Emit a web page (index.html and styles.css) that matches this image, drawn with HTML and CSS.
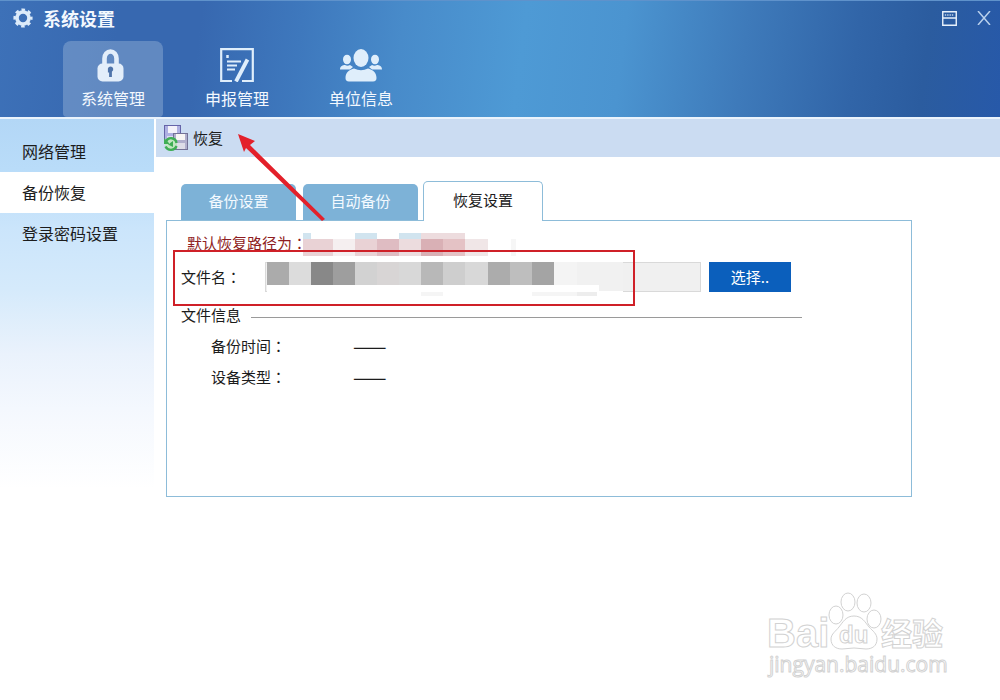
FILE: index.html
```html
<!DOCTYPE html>
<html lang="zh-CN">
<head>
    <meta charset="UTF-8">
    <meta name="viewport" content="width=device-width, initial-scale=1">
    <title>系统设置</title>
    <link rel="stylesheet" href="styles.css">
</head>
<body>
    <header>
        <div class="titlebar">
            <svg class="gear" viewBox="0 0 20 20" width="20" height="20">
                <circle cx="10" cy="10" r="8" fill="none" stroke="#dcebfa" stroke-width="3.2" stroke-dasharray="3.4 2.883" stroke-dashoffset="1.7"/>
                <circle cx="10" cy="10" r="6" fill="none" stroke="#dcebfa" stroke-width="3.6"/>
            </svg>
            <h1>系统设置</h1>
            <div class="window-buttons">
                <button type="button" aria-label="菜单">
                    <svg viewBox="0 0 16 16" width="15" height="15" fill="none" stroke="#e8f1fb">
                        <path d="M.8.8h14.4v14.4H.8zM1 7.4h14" stroke-width="1.5"/>
                        <path d="M3 4.2h10" stroke-width="2" stroke-dasharray="1.5 1" opacity=".6"/>
                    </svg>
                </button>
                <button type="button" aria-label="关闭">
                    <svg viewBox="0 0 14 14" width="14" height="14" fill="none" stroke="#b9d0ec" stroke-width="1.5">
                        <path d="M1 0l12 14M13 0L1 14"/>
                    </svg>
                </button>
            </div>
        </div>
        <nav class="toolbar">
            <a href="#" class="tool active">
                <svg viewBox="0 0 40 34" width="40" height="34">
                    <path d="M11.500 18V10.500a6 7 0 0 1 12 0v7.500" fill="none" stroke="#e3eefa" stroke-width="4.600"/>
                    <rect x="4.500" y="15.500" width="26" height="18" rx="5" fill="#e3eefa"/>
                    <path d="M17.500 18.500a2.800 2.800 0 0 1 1.400 5.200V29h-2.800V24.500h-1.200V20.500a2.800 2.800 0 0 1 2.600-2z" fill="#4f74aa"/>
                </svg>
                系统管理
            </a>
            <a href="#" class="tool">
                <svg viewBox="0 0 34 34" width="34" height="34" fill="none" stroke="#dfeefb">
                    <path d="M12 33H1.200V1.200H32.800V33H22" stroke-width="2.200"/>
                    <path d="M7.500 7v3" stroke-width="2.500"/>
                    <path d="M7 13.500h14M7 17.500h10M7 21.500h8" stroke-width="1.800"/>
                    <path d="M27.500 11.500L16 33.500" stroke-width="3.800"/>
                </svg>
                申报管理
            </a>
            <a href="#" class="tool">
                <svg viewBox="0 0 42 34" width="42" height="34" fill="#dfeefb">
                    <ellipse cx="21" cy="10" rx="7.500" ry="9"/>
                    <path d="M5.500 30c0-6 4-8 8.500-9.500q7 3.500 14 0c4.500 1.500 8.500 3.500 8.500 9.500 0 2-1 3.500-3.500 3.500h-24C6.500 33.500 5.500 32 5.500 30z"/>
                    <ellipse cx="7" cy="11.500" rx="4" ry="4.800"/>
                    <ellipse cx="35" cy="11.500" rx="4" ry="4.800"/>
                    <path d="M0 21.500c0-3.500 3-4.500 5-4.500q2.500 1.500 5 0l3 2-3 2.500zM42 21.500c0-3.500-3-4.500-5-4.500q-2.500 1.500-5 0l-3 2 3 2.500z"/>
                </svg>
                单位信息
            </a>
        </nav>
    </header>

    <div class="layout">
        <aside>
            <a href="#">网络管理</a>
            <a href="#" class="current">备份恢复</a>
            <a href="#">登录密码设置</a>
        </aside>

        <main>
            <div class="page-title">
                <svg viewBox="0 0 26 28" width="26" height="28">
                    <rect x="1.500" y="1.500" width="16" height="17" fill="#aeb0e2" stroke="#6564a8"/>
                    <rect x="5" y="2" width="9" height="7" fill="#f3f2fa"/>
                    <rect x="4" y="12" width="11" height="7" fill="#dcdcf0"/>
                    <rect x="10.500" y="9.500" width="14" height="16" fill="#b0afcd" stroke="#737296"/>
                    <rect x="13" y="10" width="9" height="6" fill="#f8f6f4"/>
                    <rect x="14" y="19" width="8" height="6" fill="#dddde8"/>
                    <circle cx="8" cy="20" r="6" fill="#c2e6c2"/>
                    <path d="M3 17.500a5.500 5.500 0 0 1 10.500 1.500M13.500 22a6 6 0 0 1-11 .5" fill="none" stroke="#3fae55" stroke-width="2.400"/>
                    <path d="M1 14v6h6zM5 20.500l5-3.500v6z" fill="#3fae55"/>
                </svg>
                <h2>恢复</h2>
                <svg class="arrow" viewBox="0 0 88 88" width="88" height="88">
                    <path d="M1 1L18 8 13 12 88 86 85 88 9 15 7 19z" fill="#e3202a"/>
                </svg>
            </div>

            <div class="tabs" role="tablist">
                <button type="button" role="tab">备份设置</button>
                <button type="button" role="tab">自动备份</button>
                <button type="button" role="tab" class="selected" aria-selected="true">恢复设置</button>
            </div>

            <section class="panel">
                <div class="row path">
                    <span>默认恢复路径为<span class="colon" lang="zh-TW">：</span></span>
                    <svg viewBox="0 0 213 24" width="213" height="24" shape-rendering="crispEdges">
                        <path d="M0 0h8v6H0zM52 0h22v6H52zM96 0h22v6H96z" fill="#d1e4ef"/>
                        <path d="M118 0h44v6h-44z" fill="#eddcde"/>
                        <path d="M0 6h30v17H0zM52 6h22v17H52z" fill="#e9d2d5"/>
                        <path d="M30 6h22v17H30z" fill="#f5eff0"/>
                        <path d="M74 6h22v17H74z" fill="#dfbcc2"/>
                        <path d="M96 6h22v17H96z" fill="#ecdcde"/>
                        <path d="M118 6h22v17h-22z" fill="#d9b0b5"/>
                        <path d="M140 6h22v17h-22z" fill="#e4c2c5"/>
                        <path d="M162 6h23v17h-23z" fill="#f0e6e7"/>
                        <path d="M208 6h5v17h-5z" fill="#f6f6f6"/>
                    </svg>
                </div>

                <div class="row file">
                    <label for="filename">文件名<span class="colon" lang="zh-TW">：</span></label>
                    <div class="field">
                        <input type="text" id="filename" readonly>
                        <svg class="mask" viewBox="0 0 358 34" width="358" height="34" shape-rendering="crispEdges">
                            <path d="M2 0h356v34H2z" fill="#fff"/>
                            <path d="M2 0h22v23H2z" fill="#ababab"/>
                            <path d="M24 0h22v23H24z" fill="#dcdcdc"/>
                            <path d="M46 0h22v23H46z" fill="#888"/>
                            <path d="M68 0h22v23H68z" fill="#9e9e9e"/>
                            <path d="M90 0h22v23H90z" fill="#d2d2d2"/>
                            <path d="M112 0h22v23h-22z" fill="#d8d5d5"/>
                            <path d="M134 0h22v23h-22zM200 0h23v23h-23z" fill="#d8d8d8"/>
                            <path d="M156 0h22v23h-22z" fill="#b8b8b8"/>
                            <path d="M178 0h22v23h-22z" fill="#cecece"/>
                            <path d="M223 0h22v23h-22z" fill="#acacac"/>
                            <path d="M245 0h22v23h-22z" fill="#bebebe"/>
                            <path d="M267 0h22v23h-22z" fill="#a4a4a4"/>
                            <path d="M289 0h23v23h-23z" fill="#f4f4f4"/>
                            <path d="M312 0h46v29h-24v-6h-22z" fill="#f1f1f1"/>
                            <path d="M156 30h22v4h-22zM267 30h45v4h-45z" fill="#f5f5f5"/>
                            <path d="M312 30h20v4h-20z" fill="#ededed"/>
                        </svg>
                    </div>
                    <button type="button" class="choose">选择..</button>
                    <div class="highlight"></div>
                </div>

                <h3 class="row info-title">文件信息</h3>
                <dl>
                    <dt>备份时间<span class="colon" lang="zh-TW">：</span></dt>
                    <dd>——</dd>
                    <dt>设备类型<span class="colon" lang="zh-TW">：</span></dt>
                    <dd>——</dd>
                </dl>
            </section>
        </main>
    </div>

    <svg class="watermark" viewBox="0 0 184 90" width="184" height="90">
        <text x="1" y="55" class="wm-latin">Bai</text>
        <ellipse cx="70" cy="23" rx="7" ry="9"/>
        <ellipse cx="82" cy="10" rx="7" ry="9"/>
        <ellipse cx="98" cy="11" rx="7" ry="9"/>
        <ellipse cx="108" cy="27" rx="7" ry="9"/>
        <path d="M88 24c8 0 11 6 15 11 4 4 8 7 8 12 0 7-5 10-11 10-4 0-8-1-12-1s-8 1-12 1c-6 0-11-3-11-10 0-5 5-8 8-12 4-5 7-11 15-11z"/>
        <text x="73" y="51" class="wm-du">du</text>
        <text x="115" y="53" class="wm-cjk">经验</text>
        <text x="3" y="80" class="wm-url">jingyan.baidu.com</text>
    </svg>
</body>
</html>
```
FILE: styles.css
```css
* {
    box-sizing: border-box;
}

body {
    position: relative;
    min-height: 100vh;
    margin: 0;
    font-family: "Noto Sans CJK SC", sans-serif;
    font-size: 15px;
    line-height: 24px;
    color: #1c1c1c;
    background: #fff;
}

h1, h2, h3, dl, dd {
    margin: 0;
    font-weight: normal;
}

a {
    color: inherit;
    text-decoration: none;
}

button {
    padding: 0;
    border: 0;
    font: inherit;
    cursor: pointer;
}

header {
    height: 119px;
    border-top: 1px solid #5f92cb;
    border-bottom: 2px solid #eaf3fc;
    color: #f3f8fe;
    background: linear-gradient(97deg, #3d71b8 0%, #3768b0 12%, #3768b0 20%, #3e78bd 30%, #488bca 40%, #4e9ad5 52%, #4b94d0 62%, #3e7aba 74%, #3165a8 85%, #2b5c9f 92%, #2759a9 100%);
}

.titlebar {
    display: flex;
    align-items: center;
    height: 34px;
    padding: 0 9px 0 13px;
}

.titlebar h1 {
    margin-left: 10px;
    font-size: 18px;
    font-weight: bold;
}

.window-buttons {
    display: flex;
    gap: 20px;
    margin-left: auto;
}

.window-buttons button {
    display: flex;
    align-items: center;
    background: none;
}

.toolbar {
    display: flex;
    gap: 24px;
    padding: 6px 63px 0;
}

.tool {
    display: flex;
    flex-direction: column;
    align-items: center;
    gap: 5px;
    width: 100px;
    height: 76px;
    padding-top: 7px;
    border-radius: 8px 8px 4px 4px;
    font-size: 16px;
    line-height: 22px;
}

.tool.active {
    background: rgba(178, 200, 225, 0.35);
}

.layout {
    display: flex;
}

aside {
    display: flex;
    flex-direction: column;
    width: 154px;
    min-height: 380px;
    padding-top: 12px;
    background: linear-gradient(#b3d7f6 0, #b9dcf9 50px, #cbe5fb 110px, #d5eafb 170px, #eaf2fc 235px, #f4f8fe 290px, #fff 370px);
}

aside a {
    padding: 8px 22px 9px;
    font-size: 16px;
}

aside a.current {
    background: #fff;
}

main {
    flex: 1;
    margin-left: 2px;
}

.page-title {
    position: relative;
    display: flex;
    align-items: center;
    gap: 4px;
    height: 38px;
    padding-left: 7px;
    background: #cbdcf2;
}

.page-title h2 {
    font-size: 15px;
}

.arrow {
    position: absolute;
    top: 14px;
    left: 81px;
    z-index: 2;
}

.tabs {
    display: flex;
    align-items: flex-end;
    gap: 7px;
    margin: 24px 88px 0 10px;
    padding-left: 15px;
}

.tabs button {
    width: 115px;
    height: 36px;
    padding-bottom: 2px;
    border-radius: 5px 5px 0 0;
    color: #f4faff;
    background: #7db2d7;
}

.tabs .selected {
    z-index: 1;
    width: 120px;
    height: 40px;
    margin: 0 0 -1px -2px;
    padding-bottom: 4px;
    border: 1px solid #8dbcd9;
    border-bottom: 0;
    color: #1c1c1c;
    background: #fff;
}

.panel {
    margin: 0 88px 0 10px;
    padding: 8px 14px 104px;
    border: 1px solid #8dbcd9;
}

.row {
    display: flex;
    align-items: center;
}

/* full-width colon sits in the middle of its box */
.colon {
    font-family: "Noto Sans CJK TC", sans-serif;
}

.path {
    height: 28px;
    padding-left: 6px;
    color: #8f1d22;
}

.path svg {
    margin: 3px 0 0 -4px;
}

.file {
    position: relative;
    height: 30px;
    margin-top: 5px;
}

.file label {
    width: 84px;
}

.field {
    position: relative;
    width: 436px;
}

.field input {
    display: block;
    width: 100%;
    height: 30px;
    padding: 0 8px;
    border: 1px solid #d9d9d9;
    font: inherit;
    background: #f0f0f0;
}

.mask {
    position: absolute;
    top: 0;
    left: 0;
}

.choose {
    width: 82px;
    height: 30px;
    margin-left: 8px;
    color: #fff;
    background: #0b5fbc;
}

.highlight {
    position: absolute;
    top: -12px;
    left: -8px;
    width: 462px;
    height: 56px;
    border: 2px solid #cf2028;
    pointer-events: none;
}

.info-title {
    gap: 10px;
    width: 621px;
    max-width: 100%;
    height: 30px;
    margin-top: 8px;
    font-size: 15px;
}

.info-title::after {
    content: "";
    flex: 1;
    height: 1px;
    margin-top: 4px;
    background: #9a9a9a;
}

dl {
    display: grid;
    grid-template-columns: 142px 1fr;
    padding-left: 30px;
    line-height: 31px;
}

dd {
    font-size: 20px;
}

.watermark {
    position: absolute;
    right: 50px;
    bottom: 18px;
    fill: #fff;
    stroke: #d2d2d2;
    stroke-width: 1;
}

.wm-latin {
    font: bold 40px "Liberation Sans", sans-serif;
}

.wm-du {
    font: bold 24px "Liberation Sans", sans-serif;
}

.wm-cjk {
    font: bold 31px "Noto Sans CJK SC", sans-serif;
}

.wm-url {
    font: 21px "Open Sans", sans-serif;
}
```
